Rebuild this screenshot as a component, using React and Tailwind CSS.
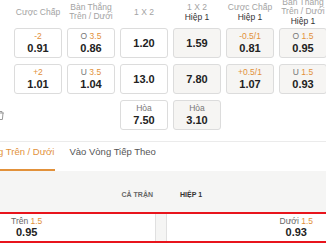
import React from 'react';

const headers = [
  { lines: ['Cược Chấp'] },
  { lines: ['Bàn Thắng', 'Trên / Dưới'] },
  { lines: ['1 X 2'] },
  { lines: ['1 X 2'], sub: 'Hiệp 1' },
  { lines: ['Cược Chấp'], sub: 'Hiệp 1' },
  { lines: ['Bàn Thắng', 'Trên / Dưới'], sub: 'Hiệp 1' },
];

const rows = [
  [
    { label: '-2', odd: '0.91' },
    { pre: 'O', label: '3.5', odd: '0.86' },
    { odd: '1.20' },
    { odd: '1.59', half: true },
    { label: '-0.5/1', odd: '0.81', half: true },
    { pre: 'O', label: '1.5', odd: '0.95', half: true },
  ],
  [
    { label: '+2', odd: '1.01' },
    { pre: 'U', label: '3.5', odd: '1.04' },
    { odd: '13.0' },
    { odd: '7.80', half: true },
    { label: '+0.5/1', odd: '1.07', half: true },
    { pre: 'U', label: '1.5', odd: '0.93', half: true },
  ],
  [null, null, { pre: 'Hòa', odd: '7.50' }, { pre: 'Hòa', odd: '3.10', half: true }, null, null],
];

const OddBox = ({ cell }) => {
  if (!cell) return <div className="h-[30px]" />;
  return (
    <div
      className={`h-[30px] rounded-[3px] border border-[#dcdcdc] flex flex-col items-center justify-center leading-none ${cell.half ? 'bg-[#f6f5f3]' : 'bg-white'}`}
    >
      {(cell.pre || cell.label) && (
        <div className="text-[8.5px] mb-[2px]">
          {cell.pre && <span className="text-[#777]">{cell.pre} </span>}
          {cell.label && <span className="text-[#e2913a]">{cell.label}</span>}
        </div>
      )}
      <div className="text-[11px] font-bold text-[#222]">{cell.odd}</div>
    </div>
  );
};

export default function App() {
  return (
    <div className="w-[326px] h-[245px] overflow-hidden bg-white font-['Liberation_Sans',Arial,sans-serif] relative">
      {/* odds grid */}
      <div className="pl-[14px] grid grid-cols-[repeat(6,48px)] gap-x-[5px]">
        {headers.map((h, i) => (
          <div key={i} className="h-[24px] flex flex-col items-center justify-center text-center leading-[9px] text-[8.5px]">
            {h.lines.map((l) => (
              <div key={l} className="text-[#a3a3a3]">{l}</div>
            ))}
            {h.sub && <div className="text-[#333] mt-[1px]">{h.sub}</div>}
          </div>
        ))}
      </div>
      <div className="pl-[14px] pt-[4px] grid grid-cols-[repeat(6,48px)] gap-x-[5px] gap-y-[6px]">
        {rows.flat().map((c, i) => (
          <OddBox key={i} cell={c} />
        ))}
      </div>

      {/* clipped icon on the left edge */}
      <svg className="absolute left-[-6px] top-[109px]" width="12" height="12" viewBox="0 0 12 12" fill="none" stroke="#9a9a9a" strokeWidth="1">
        <path d="M2 4h8M4 4V2.5h4V4M3 4l.6 6.5h4.8L9 4" />
      </svg>

      {/* tabs */}
      <div className="mt-[11px] border-t border-[#ebebeb] flex items-end h-[30px]">
        <div className="overflow-hidden">
          <div className="ml-[-43px] text-[9.5px] text-[#e2913a] pb-[10px] border-b-2 border-[#e2913a] whitespace-nowrap pr-[1px]">
            Bàn Thắng Trên / Dưới
          </div>
        </div>
        <div className="ml-[14px] text-[9.5px] text-[#555] pb-[12px] whitespace-nowrap">Vào Vòng Tiếp Theo</div>
      </div>

      {/* market table */}
      <div className="bg-[#f5f5f4] h-[41px] flex items-end pb-[12px] text-[7px] font-bold">
        <div className="w-[153px] text-right text-[#666]">CẢ TRẬN</div>
        <div className="ml-[27px] text-[#333]">HIỆP 1</div>
      </div>
      <div className="border-y-2 border-[#e8141c] flex h-[31px] bg-[#f5f5f4]">
        <div className="w-[156px] bg-white border-r border-[#e0e0e0] pl-[11px] flex items-center">
          <div className="flex flex-col items-center leading-none">
            <div className="text-[8.5px] text-[#666]">
              Trên <span className="text-[#e2913a]">1.5</span>
            </div>
            <div className="text-[11px] font-bold text-[#222] mt-[2px]">0.95</div>
          </div>
        </div>
        <div className="ml-[10px] flex-1 bg-white border-l border-[#e0e0e0] pr-[13px] flex items-center justify-end">
          <div className="flex flex-col items-center leading-none">
            <div className="text-[8.5px] text-[#666]">
              Dưới <span className="text-[#e2913a]">1.5</span>
            </div>
            <div className="text-[11px] font-bold text-[#222] mt-[2px]">0.93</div>
          </div>
        </div>
      </div>
    </div>
  );
}
